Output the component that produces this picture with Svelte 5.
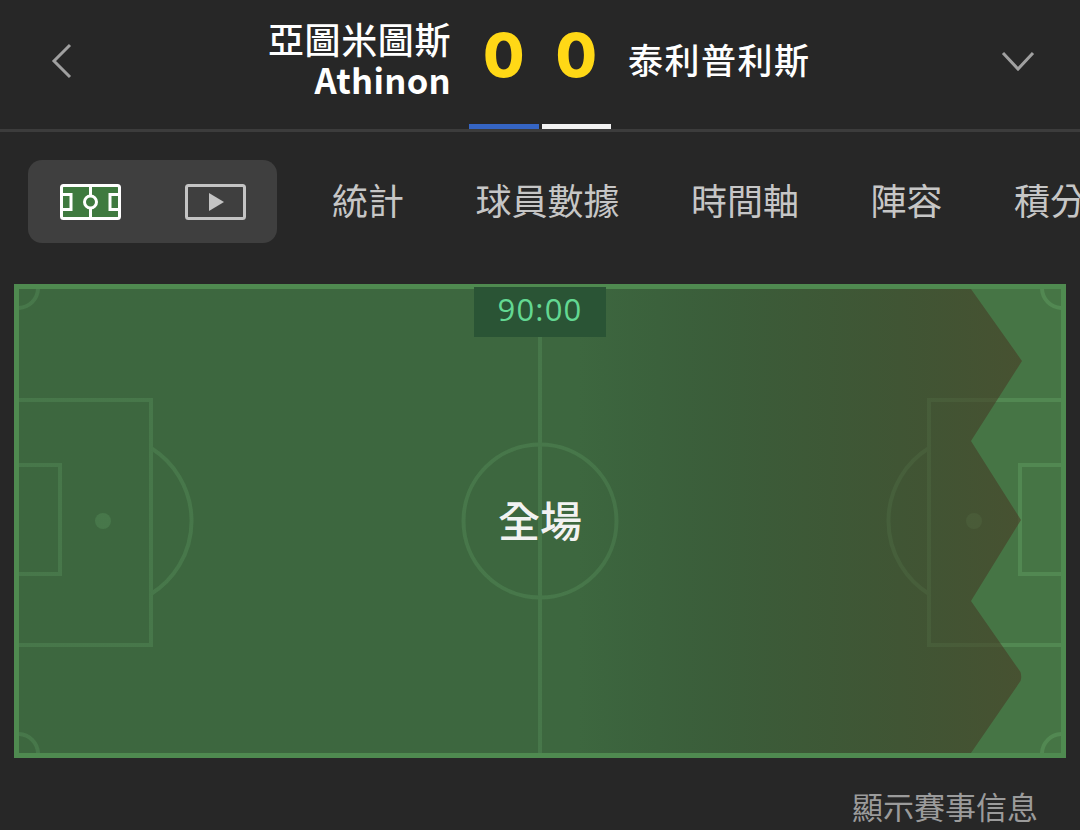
<script lang="ts">
	const tabs = ['統計', '球員數據', '時間軸', '陣容', '積分'];
</script>

<main>
	<header>
		<div class="side home">
			<svg class="back" width="22" height="36" viewBox="0 0 22 36" aria-hidden="true">
				<path d="M19 2 L3 18 L19 34" />
			</svg>
			<div class="names">
				<span>亞圖米圖斯</span>
				<span>Athinon</span>
			</div>
		</div>
		<div class="score">
			<div class="cell">
				<b>0</b>
				<i class="bar blue"></i>
			</div>
			<div class="cell">
				<b>0</b>
				<i class="bar white"></i>
			</div>
		</div>
		<div class="side away">
			<span class="away-name">泰利普利斯</span>
			<svg class="more" width="36" height="22" viewBox="0 0 36 22" aria-hidden="true">
				<path d="M3 3 L18 19 L33 3" />
			</svg>
		</div>
	</header>

	<nav>
		<div class="switch">
			<svg width="61" height="36" viewBox="0 0 61 36" aria-hidden="true">
				<rect class="ico-pitch" x="1.5" y="1.5" width="58" height="33" rx="2" />
				<path class="ico-line" d="M30.5 2 V11.5 M30.5 24.5 V34 M2 10.5 H11 V25.5 H2 M59 10.5 H50 V25.5 H59" />
				<circle class="ico-line" cx="30.5" cy="18" r="6" />
			</svg>
			<svg width="61" height="36" viewBox="0 0 61 36" aria-hidden="true">
				<rect class="ico-video" x="1.5" y="1.5" width="58" height="33" rx="2" />
				<path class="ico-play" d="M24 9 L39 18 L24 27 Z" />
			</svg>
		</div>
		{#each tabs as tab}
			<span class="tab">{tab}</span>
		{/each}
	</nav>

	<section class="pitch">
		<svg width="1052" height="474" viewBox="0 0 1052 474" aria-hidden="true">
			<defs>
				<linearGradient id="attack" gradientUnits="userSpaceOnUse" x1="0" y1="0" x2="1008" y2="0">
					<stop offset="0" stop-color="rgb(10,24,29)" stop-opacity="0.15" />
					<stop offset="0.56" stop-color="rgb(10,24,29)" stop-opacity="0.15" />
					<stop offset="0.78" stop-color="rgb(46,44,32)" stop-opacity="0.38" />
					<stop offset="1" stop-color="rgb(72,58,36)" stop-opacity="0.6" />
				</linearGradient>
			</defs>
			<rect class="grass" width="1052" height="474" />
			<g class="lines">
				<path d="M526 0 V474" />
				<circle cx="526" cy="237" r="76.5" />
				<path d="M0 116 H137 V361 H0 M0 181 H46 V290 H0" />
				<path d="M1052 116 H915 V361 H1052 M1052 181 H1006 V290 H1052" />
				<path d="M137 164 A86 86 0 0 1 137 310" />
				<path d="M915 164 A86 86 0 0 0 915 310" />
				<path d="M24 5 A20 20 0 0 1 5 24 M1028 5 A20 20 0 0 0 1047 24 M24 469 A20 20 0 0 0 5 450 M1028 469 A20 20 0 0 1 1047 450" />
			</g>
			<circle class="spot" cx="89" cy="237" r="8" />
			<circle class="spot" cx="960" cy="237" r="8" />
			<path
				d="M4 5 H957 L1008 77 L957 157 L1007 236 L957 317 L1006.5 388 Q1008 393 1006.5 397 L957 469 H4 Z"
				fill="url(#attack)"
			/>
			<rect class="edge" x="2.5" y="2.5" width="1047" height="469" />
		</svg>
		<div class="clock">90:00</div>
		<div class="period">全場</div>
	</section>

	<p class="info">顯示賽事信息</p>
</main>

<style>
	:global(body) {
		background: #272727;
	}

	main {
		width: 1080px;
		height: 830px;
		overflow: hidden;
		background: #272727;
		font-family: 'Noto Sans CJK TC', 'Noto Sans', sans-serif;
	}

	header {
		display: grid;
		grid-template-columns: 1fr 142px 1fr;
		column-gap: 18px;
		height: 129px;
		border-bottom: 3px solid #3c3c3c;
	}

	.side {
		display: flex;
		align-items: flex-start;
		justify-content: space-between;
		color: #fff;
	}

	.back {
		margin: 43px 0 0 51px;
	}

	.back path,
	.more path {
		fill: none;
		stroke: #a0a0a0;
		stroke-width: 3;
	}

	.names {
		display: flex;
		flex-direction: column;
		align-items: flex-end;
		padding-top: 18px;
		font-size: 36px;
		font-weight: 500;
		line-height: 41px;
		letter-spacing: 0.6px;
	}

	.names span:last-child {
		font-weight: 700;
		font-size: 34.5px;
		letter-spacing: 0.3px;
	}

	.score {
		display: flex;
		gap: 3px;
	}

	.cell {
		display: flex;
		flex: 1;
		flex-direction: column;
		align-items: center;
		justify-content: space-between;
	}

	.cell b {
		padding-top: 18px;
		font-family: Inter, sans-serif;
		font-size: 60px;
		font-weight: 800;
		line-height: 74px;
		color: #ffd816;
	}

	.bar {
		display: block;
		width: 100%;
		height: 5px;
	}

	.blue {
		background: #3565c4;
	}

	.white {
		background: #f2f2f2;
	}

	.away-name {
		margin-left: -1px;
		padding-top: 34px;
		font-size: 35px;
		font-weight: 500;
		line-height: 50px;
		letter-spacing: 1.5px;
	}

	.more {
		margin: 50px 44px 0 0;
	}

	nav {
		display: flex;
		align-items: center;
		gap: 71.5px;
		margin: 28px 0 0 28px;
		height: 83px;
		white-space: nowrap;
	}

	.switch {
		display: flex;
		align-items: center;
		flex: none;
		gap: 64px;
		width: 249px;
		height: 83px;
		margin-right: -16.5px;
		padding-left: 32px;
		box-sizing: border-box;
		border-radius: 14px;
		background: #3f3f3f;
	}

	.ico-pitch {
		fill: #3f7a3f;
		stroke: #fff;
		stroke-width: 3;
	}

	.ico-line {
		fill: none;
		stroke: #fff;
		stroke-width: 3;
	}

	.ico-video {
		fill: none;
		stroke: #c4c4c4;
		stroke-width: 3;
	}

	.ico-play {
		fill: #c4c4c4;
	}

	.tab {
		flex: none;
		padding-bottom: 6px;
		font-size: 36px;
		line-height: 50px;
		color: #c6c6c6;
	}

	.pitch {
		position: relative;
		width: 1052px;
		height: 474px;
		margin: 41px 0 0 14px;
	}

	.pitch svg {
		display: block;
	}

	.grass {
		fill: #467545;
	}

	.lines {
		fill: none;
		stroke: #528852;
		stroke-width: 4;
	}

	.spot {
		fill: #528852;
	}

	.edge {
		fill: none;
		stroke: #4f8a50;
		stroke-width: 5;
	}

	.clock {
		position: absolute;
		top: 3px;
		left: 460px;
		width: 132px;
		height: 50px;
		background: #2a5435;
		color: #63d892;
		font-family: 'Open Sans', sans-serif;
		font-size: 31px;
		line-height: 45px;
		letter-spacing: 1.2px;
		text-align: center;
	}

	.period {
		position: absolute;
		top: 206px;
		left: 0;
		right: 0;
		color: #f2f2f2;
		font-size: 42px;
		font-weight: 500;
		line-height: 58px;
		text-align: center;
	}

	.info {
		margin: 26px 42px 0 0;
		color: #9b9b9b;
		font-size: 31px;
		line-height: 44px;
		text-align: right;
	}
</style>
